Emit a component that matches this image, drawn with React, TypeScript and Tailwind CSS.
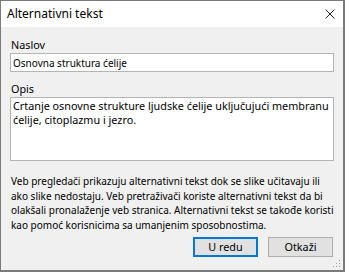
import React from "react";

export default function App() {
  return (
    <div className="relative w-[345px] h-[272px] flex flex-col border-t border-l border-r-2 border-b-2 border-[#7a7a7a] bg-[#f0f0f0] font-['Noto_Sans',sans-serif] text-black">
      <div className="h-[26px] bg-white flex items-center justify-between pl-[6px] pr-[8px]">
        <span className="text-[12px] leading-[16px]">Alternativni tekst</span>
        <svg width="10" height="10" viewBox="0 0 10 10" className="text-[#222]">
          <path d="M0.5 0.5 L9.5 9.5 M9.5 0.5 L0.5 9.5" stroke="currentColor" strokeWidth="1" fill="none" />
        </svg>
      </div>
      <div className="flex-1 flex flex-col px-[9px] pt-[11px] text-[10.8px]">
        <label className="pl-[1px] leading-[14px]">Naslov</label>
        <div className="mt-[1px] h-[19px] bg-white border border-[#b4b4b4] flex items-center pl-[2px] leading-[14px] text-[10px]">
          Osnovna struktura ćelije
        </div>
        <label className="mt-[10px] pl-[1px] leading-[14px]">Opis</label>
        <div className="mt-[1px] h-[64px] bg-white border border-[#b4b4b4] pt-[1px] pl-[2px] leading-[14px]">
          <div>Crtanje osnovne strukture ljudske ćelije uključujući membranu</div>
          <div>ćelije, citoplazmu i jezro.</div>
        </div>
        <div className="mt-[13px] pl-[1px] leading-[14.67px] whitespace-nowrap text-[10px]">
          <div>Veb pregledači prikazuju alternativni tekst dok se slike učitavaju ili</div>
          <div>ako slike nedostaju. Veb pretraživači koriste alternativni tekst da bi</div>
          <div>olakšali pronalaženje veb stranica. Alternativni tekst se takođe koristi</div>
          <div>kao pomoć korisnicima sa umanjenim sposobnostima.</div>
        </div>
        <div className="mt-[4px] flex justify-end gap-[10px] pr-[1px]">
          <button className="w-[65px] h-[20px] bg-[#e1e1e1] border-2 border-[#0078d7] text-[10.8px] leading-[14px]">
            U redu
          </button>
          <button className="w-[65px] h-[20px] bg-[#e1e1e1] border border-[#adadad] text-[10.8px] leading-[14px]">
            Otkaži
          </button>
        </div>
      </div>
      <svg className="absolute right-[2px] bottom-[2px]" width="8" height="8" viewBox="0 0 8 8">
        <rect x="6" y="0" width="1" height="1" fill="#9a9a9a" />
        <rect x="3" y="3" width="1" height="1" fill="#9a9a9a" />
        <rect x="6" y="3" width="1" height="1" fill="#9a9a9a" />
        <rect x="0" y="6" width="1" height="1" fill="#9a9a9a" />
        <rect x="3" y="6" width="1" height="1" fill="#9a9a9a" />
        <rect x="6" y="6" width="1" height="1" fill="#9a9a9a" />
      </svg>
    </div>
  );
}
